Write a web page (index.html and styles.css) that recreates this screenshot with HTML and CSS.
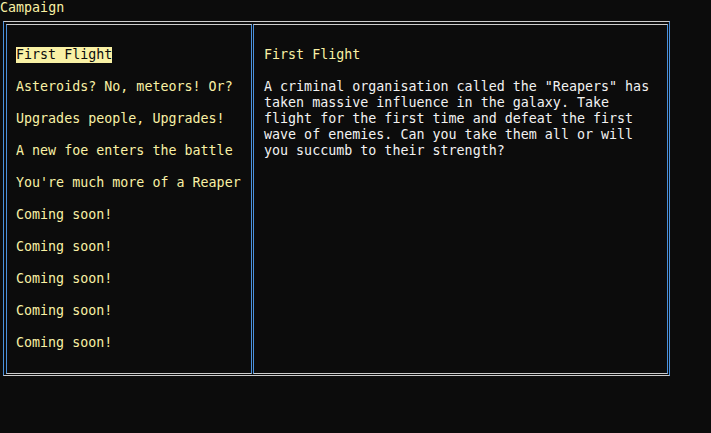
FILE: index.html
```
<!DOCTYPE html>
<html>
<head>
<meta charset="utf-8">
<link rel="stylesheet" href="styles.css">
</head>
<body>
<div class="title">Campaign</div>
<div class="frame">
  <div class="pane list">
    <div class="item"><span class="sel">First Flight</span></div>
    <div class="item">Asteroids? No, meteors! Or?</div>
    <div class="item">Upgrades people, Upgrades!</div>
    <div class="item">A new foe enters the battle</div>
    <div class="item">You're much more of a Reaper</div>
    <div class="item">Coming soon!</div>
    <div class="item">Coming soon!</div>
    <div class="item">Coming soon!</div>
    <div class="item">Coming soon!</div>
    <div class="item">Coming soon!</div>
  </div>
  <div class="pane detail">
    <div class="heading">First Flight</div>
    <p class="desc">A criminal organisation called the "Reapers" has taken massive influence in the galaxy. Take flight for the first time and defeat the first wave of enemies. Can you take them all or will you succumb to their strength?</p>
  </div>
</div>
</body>
</html>
```
FILE: styles.css
```
html, body {
  margin: 0;
  padding: 0;
  background: #0c0c0c;
}
body {
  width: 711px;
  height: 433px;
  overflow: hidden;
  font-family: "DejaVu Sans Mono", "Liberation Mono", monospace;
  font-size: 13.33px;
  line-height: 16px;
  color: #f9f1a5;
}
.title {
  height: 16px;
  color: #f9f1a5;
}
.frame {
  margin: 5px 0 0 3px;
  width: 667px;
  height: 355px;
  box-sizing: border-box;
  border-top: 1px solid #cccccc;
  border-bottom: 1px solid #cccccc;
  border-left: 1px solid #4a90dc;
  border-right: 1px solid #4a90dc;
  padding: 2px 1px 1px 2px;
  display: flex;
  gap: 1px;
}
.pane {
  box-sizing: border-box;
  height: 350px;
  border-top: 1px solid #cccccc;
  border-bottom: 1px solid #cccccc;
  border-left: 1px solid #4a90dc;
  border-right: 1px solid #4a90dc;
  padding-top: 22px;
}
.list {
  width: 246px;
  padding-left: 9px;
  display: flex;
  flex-direction: column;
  gap: 16px;
}
.item {
  height: 16px;
  white-space: nowrap;
  overflow: hidden;
}
.sel {
  display: inline-block;
  height: 16px;
  background: #f9f1a5;
  color: #0c0c0c;
}
.detail {
  width: 415px;
  padding-left: 10px;
}
.heading {
  color: #f9f1a5;
}
.desc {
  margin: 16px 0 0 0;
  width: 392px;
  color: #f2f2f2;
}
```
